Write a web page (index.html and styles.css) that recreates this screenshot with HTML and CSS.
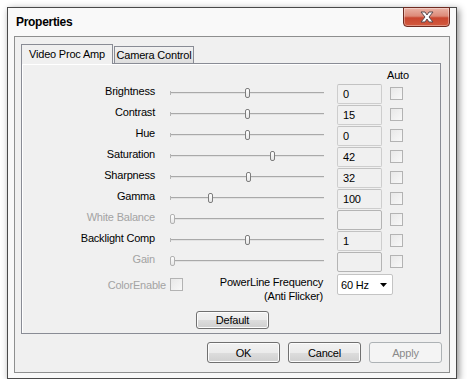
FILE: index.html
```html
<!DOCTYPE html>
<html lang="en">
<head>
    <meta charset="UTF-8">
    <title>Properties</title>
    <link rel="stylesheet" href="styles.css">
</head>
<body>

    <div class="window">
        <!-- Title bar -->
        <div class="titlebar">
            <span class="title">Properties</span>
            <button class="close-btn" aria-label="Close">
                <svg width="14" height="12" viewBox="0 0 14 12">
                    <polygon points="1,1 5,1 7,4 9,1 13,1 9,6 13,11 9,11 7,8 5,11 1,11 5,6" fill="#fdfdff" stroke="#5b4a4e" stroke-width="1" stroke-linejoin="round"/>
                </svg>
            </button>
        </div>

        <div class="client">
            <!-- Tabs -->
            <div class="tabs">
                <div class="tab active">Video Proc Amp</div>
                <div class="tab">Camera Control</div>
            </div>

            <div class="panel">
                <div class="auto-head">Auto</div>

                <div class="row">
                    <div class="label">Brightness</div>
                    <div class="slider"><div class="track"></div><div class="thumb" style="left: 75px"></div></div>
                    <div class="value">0</div>
                    <div class="check"></div>
                </div>
                <div class="row">
                    <div class="label">Contrast</div>
                    <div class="slider"><div class="track"></div><div class="thumb" style="left: 75px"></div></div>
                    <div class="value">15</div>
                    <div class="check"></div>
                </div>
                <div class="row">
                    <div class="label">Hue</div>
                    <div class="slider"><div class="track"></div><div class="thumb" style="left: 75px"></div></div>
                    <div class="value">0</div>
                    <div class="check"></div>
                </div>
                <div class="row">
                    <div class="label">Saturation</div>
                    <div class="slider"><div class="track"></div><div class="thumb" style="left: 100px"></div></div>
                    <div class="value">42</div>
                    <div class="check"></div>
                </div>
                <div class="row">
                    <div class="label">Sharpness</div>
                    <div class="slider"><div class="track"></div><div class="thumb" style="left: 76px"></div></div>
                    <div class="value">32</div>
                    <div class="check"></div>
                </div>
                <div class="row">
                    <div class="label">Gamma</div>
                    <div class="slider"><div class="track"></div><div class="thumb" style="left: 38px"></div></div>
                    <div class="value">100</div>
                    <div class="check"></div>
                </div>
                <div class="row disabled">
                    <div class="label">White Balance</div>
                    <div class="slider"><div class="track"></div><div class="thumb" style="left: 0px"></div></div>
                    <div class="value"></div>
                    <div class="check"></div>
                </div>
                <div class="row">
                    <div class="label">Backlight Comp</div>
                    <div class="slider"><div class="track"></div><div class="thumb" style="left: 75px"></div></div>
                    <div class="value">1</div>
                    <div class="check"></div>
                </div>
                <div class="row disabled">
                    <div class="label">Gain</div>
                    <div class="slider"><div class="track"></div><div class="thumb" style="left: 0px"></div></div>
                    <div class="value"></div>
                    <div class="check"></div>
                </div>

                <!-- ColorEnable + PowerLine -->
                <div class="row-bottom">
                    <div class="color-enable">
                        <span class="label-disabled">ColorEnable</span>
                        <div class="check"></div>
                    </div>
                    <div class="powerline">PowerLine Frequency<br>(Anti Flicker)</div>
                    <div class="select">
                        <span>60 Hz</span>
                        <svg width="7" height="4" viewBox="0 0 7 4"><polygon points="0,0 7,0 3.5,4" fill="#000"/></svg>
                    </div>
                </div>

                <div class="default-row">
                    <button class="btn btn-default">Default</button>
                </div>
            </div>

            <div class="buttons">
                <button class="btn">OK</button>
                <button class="btn">Cancel</button>
                <button class="btn" disabled>Apply</button>
            </div>
        </div>
    </div>

</body>
</html>
```

FILE: styles.css
```css
/* Base */
html, body {
    margin: 0;
    padding: 0;
    background-color: #ffffff;
    font-family: "Liberation Sans", Arial, sans-serif;
    font-size: 11px;
    letter-spacing: -0.2px;
    color: #000;
}

/* Window frame */
.window {
    position: relative;
    box-sizing: border-box;
    width: 450px;
    height: 372px;
    margin: 7px 0 0 7px;
    border: 1px solid #4a4a4a;
    background-color: #f9f9f9;
    box-shadow: 2px 2px 7px rgba(0, 0, 0, 0.45);
}
.titlebar {
    display: flex;
    align-items: center;
    height: 28px;
    padding-left: 8px;
}
.title {
    font-size: 12px;
    font-weight: bold;
    letter-spacing: -0.3px;
}
.close-btn {
    position: absolute;
    top: -1px;
    right: 6px;
    width: 47px;
    height: 20px;
    padding: 0;
    border: 1px solid #6e2a20;
    border-radius: 0 0 4px 4px;
    background: linear-gradient(#eab3a6 0%, #dd8a78 45%, #c9462f 55%, #d35a3f 100%);
    box-shadow: inset 0 0 0 1px rgba(255, 255, 255, 0.35);
    display: flex;
    align-items: center;
    justify-content: center;
}
.close-btn svg {
    display: block;
}

/* Client area */
.client {
    box-sizing: border-box;
    height: 337px;
    margin: 0 6px 5px 6px;
    padding: 7px 8px 0 6px;
    border: 1px solid #8e8f8f;
    background-color: #f0f0f0;
}

/* Tabs */
.tabs {
    display: flex;
    align-items: flex-end;
    height: 20px;
    margin-bottom: -1px;
}
.tab {
    box-sizing: border-box;
    height: 17px;
    width: 80px;
    margin: 0 0 1px 1px;
    border: 1px solid #898c95;
    border-bottom: none;
    background: linear-gradient(#f2f2f2, #dedede);
    text-align: center;
    line-height: 17px;
}
.tab.active {
    position: relative;
    z-index: 1;
    width: 92px;
    height: 20px;
    margin: 0;
    background-color: #f0f0f0;
    background-image: none;
    line-height: 18px;
}

/* Panel */
.panel {
    box-sizing: border-box;
    height: 271px;
    border: 1px solid #898c95;
    background-color: #f0f0f0;
    box-shadow: inset 1px 1px 0 #fff;
}
.auto-head {
    height: 18px;
    padding: 2px 0 0 365px;
    line-height: 18px;
}

/* Property rows */
.row {
    display: flex;
    align-items: flex-start;
    height: 21px;
}
.label {
    width: 133px;
    text-align: right;
    line-height: 13px;
    margin-top: 1px;
}
.slider {
    position: relative;
    width: 154px;
    height: 10px;
    margin: 4px 0 0 15px;
}
.track {
    position: absolute;
    left: 0;
    right: 0;
    top: 4px;
    height: 0;
    border-top: 1px solid #a9a9a9;
    border-bottom: 1px solid #e2e2e2;
}
.track::before {
    content: "";
    position: absolute;
    left: 0;
    top: -2px;
    width: 1px;
    height: 4px;
    background-color: #b5b5b5;
}
.thumb {
    position: absolute;
    top: 0;
    box-sizing: border-box;
    width: 5px;
    height: 10px;
    border: 1px solid #7d7d7d;
    border-radius: 2px;
    background: linear-gradient(#ffffff, #e6e6e6);
}
.value {
    box-sizing: border-box;
    width: 45px;
    height: 20px;
    margin-left: 13px;
    padding-left: 5px;
    border: 1px solid #cdcdcd;
    border-top-color: #c2c2c2;
    border-radius: 2px;
    background-color: #f0f0f0;
    line-height: 18px;
}
.check {
    box-sizing: border-box;
    width: 13px;
    height: 13px;
    margin: 3px 0 0 8px;
    border: 1px solid #b3b3b3;
    background: linear-gradient(135deg, #e8e8e8, #f8f8f8);
}
.row.disabled .label {
    color: #a3a3a3;
}
.row.disabled .thumb {
    border-color: #b1b1b1;
}
.row.disabled .value {
    border-color: #b4b4b4;
}

/* ColorEnable / PowerLine */
.row-bottom {
    display: flex;
    align-items: flex-start;
    height: 30px;
}
.color-enable {
    display: flex;
    align-items: center;
    justify-content: flex-end;
    width: 161px;
    margin-top: 5px;
}
.color-enable .check {
    margin: 0 0 0 4px;
}
.label-disabled {
    color: #a3a3a3;
}
.powerline {
    width: 140px;
    margin-top: 2px;
    text-align: right;
    line-height: 14px;
}
.select {
    box-sizing: border-box;
    display: flex;
    align-items: center;
    justify-content: space-between;
    width: 56px;
    height: 21px;
    margin: 1px 0 0 14px;
    padding: 0 5px 0 3px;
    border: 1px solid #c4c4c4;
    border-radius: 2px;
    background-color: #ffffff;
}

/* Buttons */
.default-row {
    display: flex;
    justify-content: center;
    margin-top: 8px;
    padding-left: 3px;
}
.btn {
    box-sizing: border-box;
    width: 73px;
    height: 21px;
    padding: 0;
    border: 1px solid #707070;
    border-radius: 3px;
    background: linear-gradient(#f2f2f2 0%, #ebebeb 50%, #dddddd 51%, #cfcfcf 100%);
    box-shadow: inset 0 0 0 1px #fcfcfc;
    font-family: inherit;
    font-size: 11px;
    letter-spacing: -0.2px;
    color: #000;
}
.btn-default {
    height: 18px;
}
.btn:disabled {
    border-color: #adb2b5;
    background: #f4f4f4;
    box-shadow: none;
    color: #8a8a8a;
}
.buttons {
    display: flex;
    justify-content: flex-end;
    gap: 8px;
    margin: 8px -1px 0 0;
}
```
